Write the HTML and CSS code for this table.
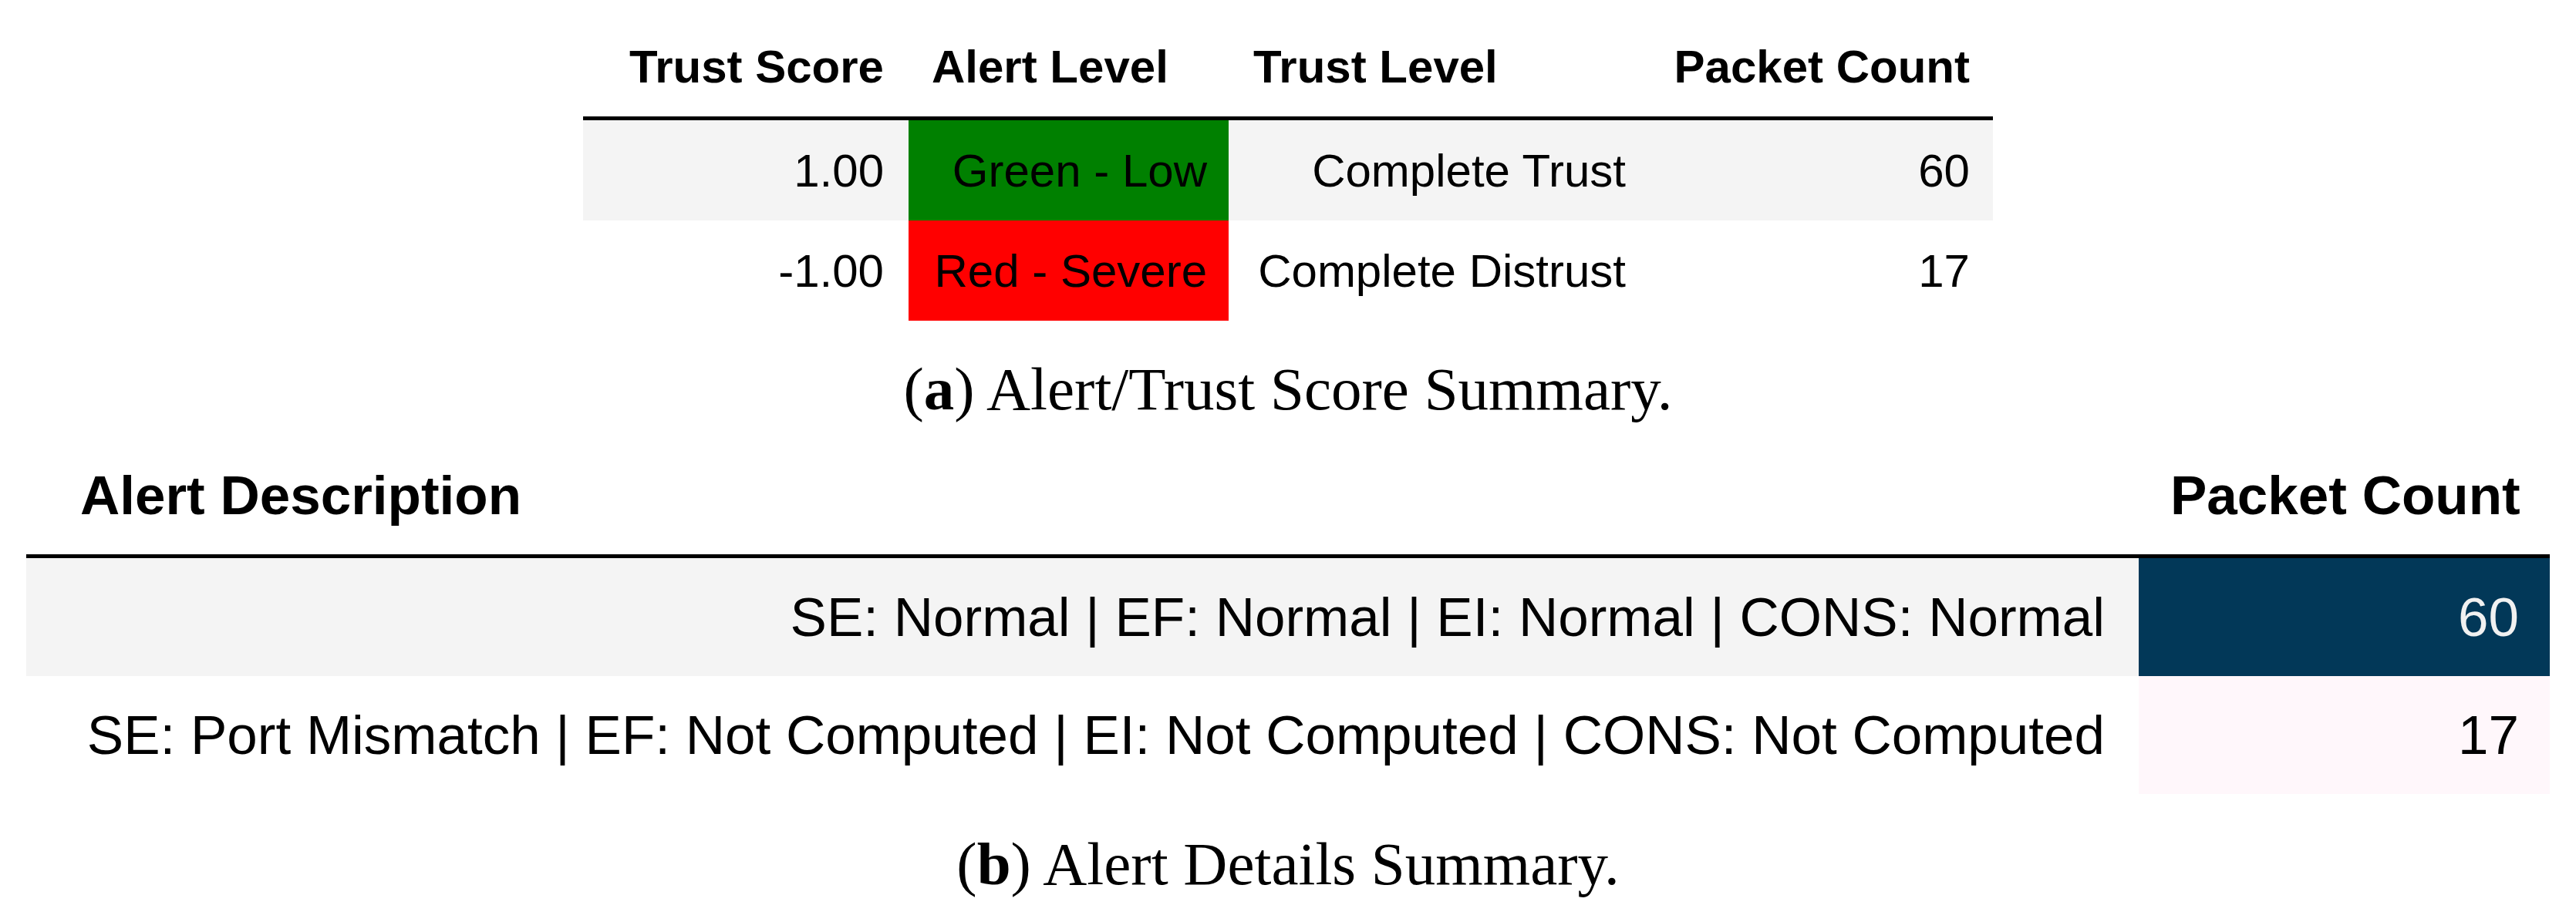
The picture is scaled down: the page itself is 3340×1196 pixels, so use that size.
FILE: index.html
```html
<!DOCTYPE html>
<html lang="en">
<head>
<meta charset="utf-8">
<title>Alert Summary</title>
<link rel="stylesheet" href="styles.css">
</head>
<body>
<figure class="sub sub-a">
  <table class="tbl t1">
    <colgroup>
      <col class="w-score"><col class="w-alert"><col class="w-level"><col class="w-count">
    </colgroup>
    <thead>
      <tr>
        <th class="h-score">Trust Score</th>
        <th class="h-alert">Alert Level</th>
        <th class="h-level">Trust Level</th>
        <th class="h-count">Packet Count</th>
      </tr>
    </thead>
    <tbody>
      <tr class="row-odd">
        <td class="d-score">1.00</td>
        <td class="d-alert green">Green - Low</td>
        <td class="d-level">Complete Trust</td>
        <td class="d-count">60</td>
      </tr>
      <tr>
        <td class="d-score">-1.00</td>
        <td class="d-alert red">Red - Severe</td>
        <td class="d-level">Complete Distrust</td>
        <td class="d-count">17</td>
      </tr>
    </tbody>
  </table>
  <figcaption class="cap cap-a">(<b>a</b>) Alert/Trust Score Summary.</figcaption>
</figure>
<figure class="sub sub-b">
  <table class="tbl t2">
    <colgroup>
      <col class="w-desc"><col class="w-pc">
    </colgroup>
    <thead>
      <tr>
        <th class="h-desc">Alert Description</th>
        <th class="h-pc">Packet Count</th>
      </tr>
    </thead>
    <tbody>
      <tr class="row-odd">
        <td class="d-desc">SE: Normal | EF: Normal | EI: Normal | CONS: Normal</td>
        <td class="d-pc pc-high">60</td>
      </tr>
      <tr>
        <td class="d-desc">SE: Port Mismatch | EF: Not Computed | EI: Not Computed | CONS: Not Computed</td>
        <td class="d-pc pc-low">17</td>
      </tr>
    </tbody>
  </table>
  <figcaption class="cap cap-b">(<b>b</b>) Alert Details Summary.</figcaption>
</figure>
</body>
</html>
```

FILE: styles.css
```css
html, body {
  margin: 0;
  padding: 0;
  background: #ffffff;
}

body {
  width: 3340px;
  color: #000000;
}

.sub {
  margin: 0;
  padding: 0;
}

.sub-a {
  padding-top: 42px;
}

.sub-b {
  margin-top: 40px;
}

.tbl {
  margin: 0 auto;
  border-collapse: separate;
  border-spacing: 0;
  table-layout: fixed;
  font-family: "Liberation Sans", Arial, sans-serif;
  color: #000000;
}

.tbl th {
  font-weight: bold;
  border-bottom: 5px solid #000000;
  white-space: nowrap;
  vertical-align: bottom;
}

.tbl td {
  padding: 0;
  white-space: nowrap;
  vertical-align: middle;
  text-align: right;
}

.row-odd td {
  background: #f4f4f4;
}

/* ---------- table (a) ---------- */
.t1 {
  width: 1828px;
  font-size: 60px;
}

.t1 th {
  line-height: 69px;
  padding: 10px 0 30px 0;
}

.t1 td {
  height: 130px;
  line-height: 69px;
}

.w-score { width: 422px; }
.w-alert { width: 415px; }
.w-level { width: 547px; }
.w-count { width: 444px; }

.h-score { text-align: right; padding-right: 32px !important; }
.h-alert { text-align: left; padding-left: 30px !important; }
.h-level { text-align: left; padding-left: 32px !important; }
.h-count { text-align: right; padding-right: 30px !important; }

.d-score { padding-right: 32px !important; }
.d-alert { padding-right: 28px !important; }
.d-level { padding-right: 32px !important; }
.d-count { padding-right: 30px !important; }

.row-odd td.green,
td.green {
  background: #008000;
}

.row-odd td.red,
td.red {
  background: #ff0000;
}

/* ---------- table (b) ---------- */
.t2 {
  width: 3272px;
  font-size: 71px;
}

.t2 th {
  line-height: 82px;
  padding: 12px 0 35px 0;
}

.t2 td {
  height: 153px;
  line-height: 82px;
}

.w-desc { width: 2739px; }
.w-pc { width: 533px; }

.h-desc { text-align: left; padding-left: 70px !important; }
.h-pc { text-align: left; padding-left: 41px !important; }

.d-desc { padding-right: 44px !important; }
.d-pc { padding-right: 40px !important; }

.row-odd td.pc-high,
td.pc-high {
  background: #023858;
  color: #f1f1f1;
}

td.pc-low {
  background: #fff7fb;
  color: #000000;
}

/* ---------- captions ---------- */
.cap {
  display: block;
  font-family: "Liberation Serif", "Times New Roman", serif;
  font-size: 79px;
  line-height: 90px;
  text-align: center;
  color: #000000;
}

.cap b {
  font-weight: bold;
}

.cap-a {
  margin-top: 44px;
}

.cap-b {
  margin-top: 46px;
}
```
